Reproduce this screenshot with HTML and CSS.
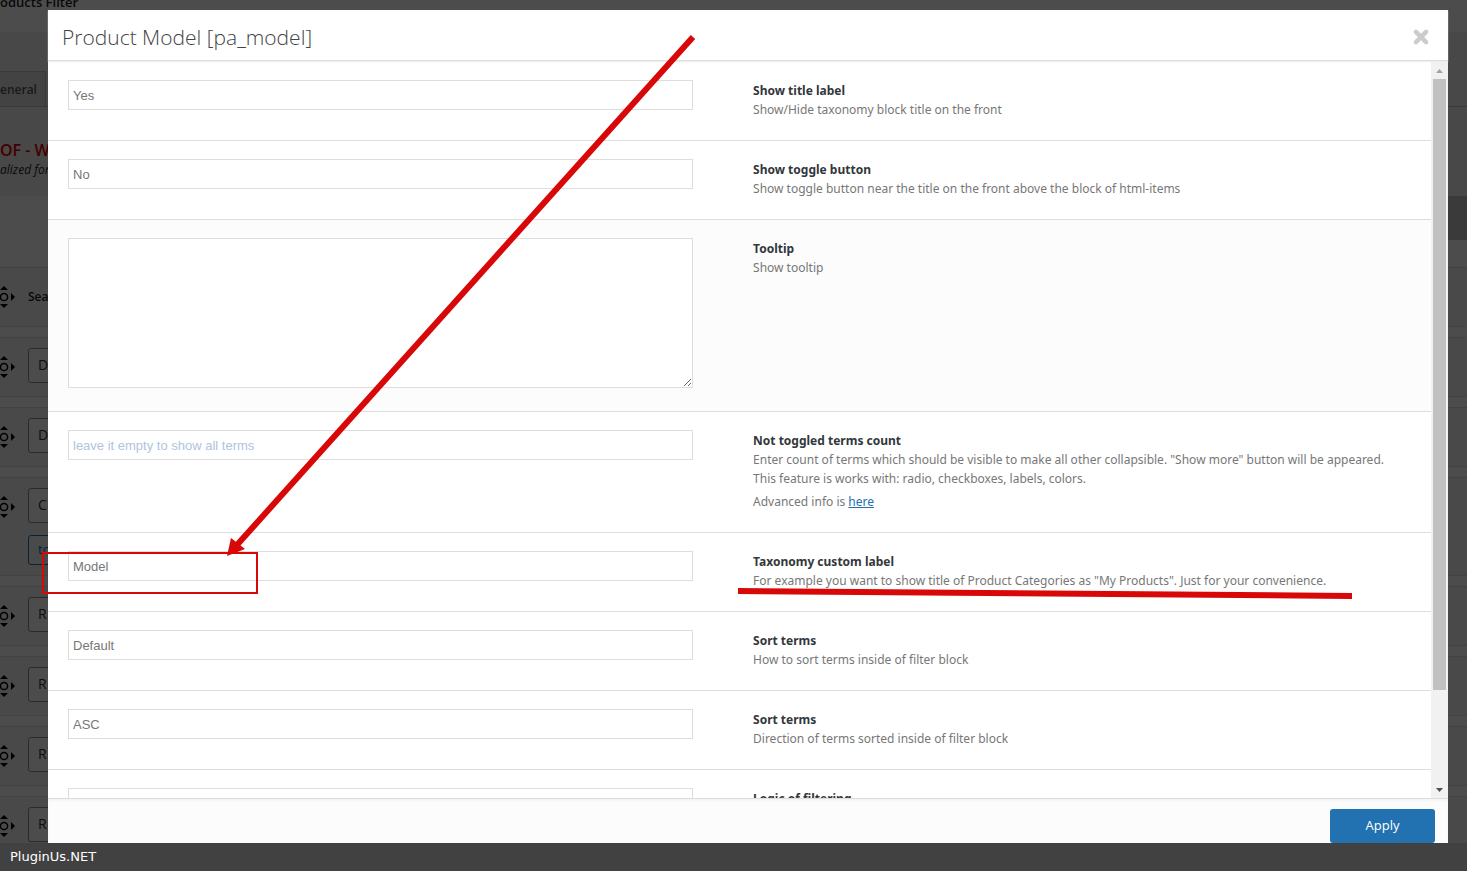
FILE: index.html
```html
<!DOCTYPE html>
<html lang="en">

<head>
  <meta charset="UTF-8">
  <title>Products Filter</title>
  <link rel="stylesheet" href="styles.css">
</head>

<body>
  <!-- settings page under the popup -->
  <div class="page">
    <div class="page-title">oducts Filter</div>
    <div class="page-tabs"><div class="page-tab">eneral</div></div>
    <div class="page-intro">
      <div class="page-name">OF - W</div>
      <div class="page-note">alized for</div>
    </div>
    <div class="page-bar"></div>
    <ul class="filter-list" id="filter-list">
      <li class="filter-item"><svg class="move-icon" viewBox="0 0 22 22"><use href="#move"/></svg><b class="filter-name">Sea</b></li>
      <li class="filter-item"><svg class="move-icon" viewBox="0 0 22 22"><use href="#move"/></svg><select class="filter-select" aria-label="Type 1"><option>D</option></select></li>
      <li class="filter-item"><svg class="move-icon" viewBox="0 0 22 22"><use href="#move"/></svg><select class="filter-select" aria-label="Type 2"><option>D</option></select></li>
      <li class="filter-item filter-item_tall"><svg class="move-icon" viewBox="0 0 22 22"><use href="#move"/></svg>
        <div>
          <select class="filter-select" aria-label="Type 3"><option>C</option></select>
          <button class="filter-button" type="button">to</button>
        </div>
      </li>
      <li class="filter-item"><svg class="move-icon" viewBox="0 0 22 22"><use href="#move"/></svg><select class="filter-select" aria-label="Type 4"><option>R</option></select></li>
      <li class="filter-item"><svg class="move-icon" viewBox="0 0 22 22"><use href="#move"/></svg><select class="filter-select" aria-label="Type 5"><option>R</option></select></li>
      <li class="filter-item"><svg class="move-icon" viewBox="0 0 22 22"><use href="#move"/></svg><select class="filter-select" aria-label="Type 6"><option>R</option></select></li>
      <li class="filter-item"><svg class="move-icon" viewBox="0 0 22 22"><use href="#move"/></svg><select class="filter-select" aria-label="Type 7"><option>R</option></select></li>
    </ul>
  </div>

  <svg width="0" height="0" class="icon-defs">
    <symbol id="move" viewBox="0 0 22 22">
      <circle cx="11" cy="11" r="3.6" fill="none" stroke="#000" stroke-width="1.5"/>
      <path d="M11 0l4 4H7zM11 22l4-4H7zM22 11l-4 4V7zM0 11l4 4V7z"/>
    </symbol>
  </svg>

  <div class="backdrop"></div>

  <div class="modal">
    <div class="modal-header">
      <h3 class="modal-title">Product Model [pa_model]</h3>
      <button class="modal-close" type="button" aria-label="Close">
        <svg viewBox="0 0 16 16"><path d="M3.500 3.500l9 9M12.500 3.500l-9 9"/></svg>
      </button>
    </div>

    <div class="modal-main">
      <div class="modal-content">
        <div class="row">
          <select class="control" id="title-label"><option>Yes</option><option>No</option></select>
          <div class="info">
            <label for="title-label">Show title label</label>
            <p>Show/Hide taxonomy block title on the front</p>
          </div>
        </div>
        <div class="row">
          <select class="control" id="toggle-button"><option>No</option><option>Yes</option></select>
          <div class="info">
            <label for="toggle-button">Show toggle button</label>
            <p>Show toggle button near the title on the front above the block of html-items</p>
          </div>
        </div>
        <div class="row row_grey">
          <textarea class="control control_area" id="tooltip"></textarea>
          <div class="info">
            <label for="tooltip">Tooltip</label>
            <p>Show tooltip</p>
          </div>
        </div>
        <div class="row">
          <input class="control" type="text" id="terms-count" placeholder="leave it empty to show all terms">
          <div class="info">
            <label for="terms-count">Not toggled terms count</label>
            <p>Enter count of terms which should be visible to make all other collapsible. "Show more" button will be appeared.<br>This feature is works with: radio, checkboxes, labels, colors.</p>
            <p class="info-more">Advanced info is <a href="#">here</a></p>
          </div>
        </div>
        <div class="row">
          <input class="control" type="text" id="custom-label" value="Model">
          <div class="info">
            <label for="custom-label">Taxonomy custom label</label>
            <p>For example you want to show title of Product Categories as "My Products". Just for your convenience.</p>
          </div>
        </div>
        <div class="row">
          <select class="control" id="sort-by"><option>Default</option></select>
          <div class="info">
            <label for="sort-by">Sort terms</label>
            <p>How to sort terms inside of filter block</p>
          </div>
        </div>
        <div class="row">
          <select class="control" id="sort-dir"><option>ASC</option><option>DESC</option></select>
          <div class="info">
            <label for="sort-dir">Sort terms</label>
            <p>Direction of terms sorted inside of filter block</p>
          </div>
        </div>
        <div class="row">
          <select class="control" id="logic"><option>OR</option><option>AND</option></select>
          <div class="info">
            <label for="logic">Logic of filtering</label>
          </div>
        </div>
      </div>
      <div class="scroll">
        <svg class="scroll-arrow" viewBox="0 0 17 17"><path d="M5 11h7L8.500 7z" fill="#a3a3a3"/></svg>
        <div class="scroll-track"><div class="scroll-thumb"></div></div>
        <svg class="scroll-arrow" viewBox="0 0 17 17"><path d="M5 7h7L8.500 11z" fill="#505050"/></svg>
      </div>
    </div>

    <div class="modal-footer">
      <button class="apply" type="button">Apply</button>
    </div>
  </div>

  <div class="brand">PluginUs.NET</div>

  <!-- red marks over the popup -->
  <svg class="marks" width="1467" height="871">
    <path d="M693 37L236 546" fill="none" stroke="#d80808" stroke-width="6"/>
    <path d="M227 556l4-18 14 11z" fill="#d80808"/>
    <rect x="43" y="553" width="214" height="40" fill="none" stroke="#d80808" stroke-width="2"/>
    <path d="M738 588L1352 593V599L738 594z" fill="#d80808"/>
  </svg>
</body>

</html>
```
FILE: styles.css
```css
* {
  box-sizing: border-box;
}

body {
  margin: 0;
  height: 100vh;
  overflow: hidden;
  font-family: "Open Sans", "Noto Sans", sans-serif;
  font-size: 13px;
  background: #fff;
}

h3,
p,
ul {
  margin: 0;
  padding: 0;
}

/* page */

.page {
  color: #1d2327;
}

.page-title {
  height: 32px;
  font-size: 13px;
  line-height: 4px;
  font-weight: 600;
}

.page-tabs {
  padding-top: 39px;
  background: #f0f0f0;
  border-bottom: 1px solid #c3c4c7;
}

.page-tab {
  width: 46px;
  height: 35px;
  line-height: 35px;
  font-size: 12px;
  font-weight: 600;
  color: #50575e;
  background: #e0e0e0;
  border: 1px solid #c3c4c7;
  border-width: 1px 1px 0 0;
}

.page-intro {
  height: 89px;
  padding-top: 33px;
  background: #f0f0f0;
}

.page-name {
  font-size: 16px;
  line-height: 20px;
  font-weight: 600;
  color: #e00000;
}

.page-note {
  line-height: 19px;
  font-size: 12px;
  font-style: italic;
}

.page-bar {
  width: 50%;
  height: 44px;
  margin-left: auto;
  background: #c3c4c7;
}

.filter-list {
  display: flex;
  flex-direction: column;
  gap: 10px;
  padding-top: 27px;
  list-style: none;
}

.filter-item {
  display: flex;
  gap: 13px;
  height: 60px;
  padding-top: 10px;
  background: #f6f6f6;
  border: 1px solid #dcdcde;
  border-width: 1px 0;
}

.filter-item_tall {
  height: 99px;
}

.move-icon {
  flex: none;
  width: 22px;
  height: 22px;
  margin: 8px 0 0 -7px;
}

.icon-defs {
  position: absolute;
}

.filter-name {
  font-size: 12px;
  font-weight: 600;
  line-height: 38px;
}

.filter-select,
.filter-button {
  display: block;
  width: 200px;
  height: 35px;
  padding: 0 9px 2px;
  font: 14px "Open Sans", sans-serif;
  text-align: left;
  color: #2c3338;
  background: #fff;
  border: 1px solid #8c8f94;
  border-radius: 3px;
  appearance: none;
}

.filter-button {
  height: 30px;
  margin-top: 12px;
  font-size: 13px;
  color: #2271b1;
  background: #f6f7f7;
  border-color: #2271b1;
}

.backdrop {
  position: fixed;
  inset: 0;
  background: rgba(0, 0, 0, 0.7);
}

/* popup */

.modal {
  position: fixed;
  inset: 10px 19px 28px 48px;
  display: flex;
  flex-direction: column;
  background: #fff;
}

.modal-header {
  display: flex;
  align-items: center;
  justify-content: space-between;
  height: 51px;
  margin-bottom: 1px;
  padding: 3px 18px 0 14px;
  border-bottom: 1px solid #ddd;
  box-shadow: 0 1px 1px #eee;
}

.modal-title {
  font-size: 21px;
  line-height: 30px;
  font-weight: 300;
  color: #444;
}

.modal-close {
  width: 18px;
  height: 18px;
  padding: 0;
  background: none;
  border: 0;
}

.modal-close svg {
  display: block;
  fill: none;
  stroke: #ccc;
  stroke-width: 4;
  stroke-linecap: round;
}

.modal-main {
  display: flex;
  flex: 1;
  min-height: 0;
}

.modal-content {
  flex: 1;
  overflow: hidden;
}

.row {
  display: grid;
  grid-template-columns: 19fr 20fr;
  column-gap: 60px;
  align-items: start;
  padding: 18px 20px 21px;
  border-bottom: 1px solid #ddd;
}

.row_grey {
  background: #fcfcfc;
}

.control {
  display: block;
  width: 100%;
  height: 30px;
  margin: 0;
  padding: 0 4px;
  font: 13px "Liberation Sans", Arial, sans-serif;
  color: #777;
  background: #fff;
  border: 1px solid #ddd;
  border-radius: 0;
  appearance: none;
}

.control_area {
  height: 150px;
  margin-bottom: 2px;
  resize: vertical;
}

.control::placeholder {
  color: #b0c4de;
}

.info {
  padding-top: 1px;
  line-height: 19px;
  font-family: "Noto Sans", sans-serif;
  font-size: 12px;
  color: #777;
}

.info label {
  display: block;
  font-weight: 700;
  color: #32373c;
}

.info-more {
  margin-top: 4px;
}

.info a {
  color: #2271b1;
}

.scroll {
  display: flex;
  flex-direction: column;
  width: 17px;
  background: #f1f1f1;
}

.scroll-arrow {
  flex: none;
  width: 17px;
  height: 17px;
}

.scroll-track {
  flex: 1;
  padding: 0 2px;
}

.scroll-thumb {
  height: 87%;
  background: #c1c1c1;
}

.modal-footer {
  display: flex;
  justify-content: flex-end;
  height: 45px;
  padding: 10px 13px 0;
  background: #fcfcfc;
  border-top: 1px solid #ddd;
  box-shadow: inset 0 2px 2px #f4f4f4;
}

.apply {
  width: 105px;
  height: 34px;
  padding: 0 0 2px;
  font: 13px "Open Sans", sans-serif;
  color: #fff;
  background: #2271b1;
  border: 0;
  border-radius: 3px;
}

.brand {
  position: fixed;
  inset: auto 0 0;
  height: 28px;
  padding-left: 10px;
  font: 13px/28px "DejaVu Sans", sans-serif;
  color: #fff;
  background: #414141;
}

.marks {
  position: absolute;
  top: 0;
  left: 0;
  pointer-events: none;
}
```
